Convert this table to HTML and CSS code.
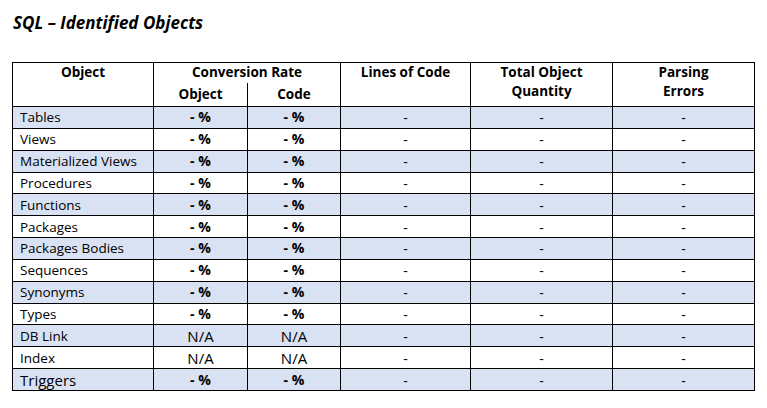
FILE: index.html
```html
<!DOCTYPE html>
<html>
<head>
<meta charset="utf-8">
<link rel="stylesheet" href="styles.css">
</head>
<body>
<h1 class="title">SQL – Identified Objects</h1>
<table class="grid">
  <colgroup>
    <col class="c-obj"><col class="c-rate"><col class="c-rate2"><col class="c-loc"><col class="c-tot"><col class="c-err">
  </colgroup>
  <thead>
    <tr class="h1">
      <th rowspan="2" class="top">Object</th>
      <th colspan="2" class="rate">Conversion Rate</th>
      <th rowspan="2" class="top">Lines of Code</th>
      <th rowspan="2" class="top">Total Object<br>Quantity</th>
      <th rowspan="2" class="top">Parsing<br>Errors</th>
    </tr>
    <tr class="h2">
      <th class="sub">Object</th>
      <th class="sub sub2">Code</th>
    </tr>
  </thead>
  <tbody>
    <tr class="alt"><td class="name">Tables</td><td class="pct">- %</td><td class="pct">- %</td><td class="dash">-</td><td class="dash">-</td><td class="dash">-</td></tr>
    <tr><td class="name">Views</td><td class="pct">- %</td><td class="pct">- %</td><td class="dash">-</td><td class="dash">-</td><td class="dash">-</td></tr>
    <tr class="alt"><td class="name">Materialized Views</td><td class="pct">- %</td><td class="pct">- %</td><td class="dash">-</td><td class="dash">-</td><td class="dash">-</td></tr>
    <tr><td class="name">Procedures</td><td class="pct">- %</td><td class="pct">- %</td><td class="dash">-</td><td class="dash">-</td><td class="dash">-</td></tr>
    <tr class="alt"><td class="name">Functions</td><td class="pct">- %</td><td class="pct">- %</td><td class="dash">-</td><td class="dash">-</td><td class="dash">-</td></tr>
    <tr><td class="name">Packages</td><td class="pct">- %</td><td class="pct">- %</td><td class="dash">-</td><td class="dash">-</td><td class="dash">-</td></tr>
    <tr class="alt"><td class="name">Packages Bodies</td><td class="pct">- %</td><td class="pct">- %</td><td class="dash">-</td><td class="dash">-</td><td class="dash">-</td></tr>
    <tr><td class="name">Sequences</td><td class="pct">- %</td><td class="pct">- %</td><td class="dash">-</td><td class="dash">-</td><td class="dash">-</td></tr>
    <tr class="alt"><td class="name">Synonyms</td><td class="pct">- %</td><td class="pct">- %</td><td class="dash">-</td><td class="dash">-</td><td class="dash">-</td></tr>
    <tr><td class="name">Types</td><td class="pct">- %</td><td class="pct">- %</td><td class="dash">-</td><td class="dash">-</td><td class="dash">-</td></tr>
    <tr class="alt"><td class="name">DB Link</td><td class="na">N/A</td><td class="na">N/A</td><td class="dash">-</td><td class="dash">-</td><td class="dash">-</td></tr>
    <tr><td class="name">Index</td><td class="na">N/A</td><td class="na">N/A</td><td class="dash">-</td><td class="dash">-</td><td class="dash">-</td></tr>
    <tr class="alt"><td class="name big">Triggers</td><td class="pct">- %</td><td class="pct">- %</td><td class="dash">-</td><td class="dash">-</td><td class="dash">-</td></tr>
  </tbody>
</table>
</body>
</html>
```
FILE: styles.css
```css
html, body {
  margin: 0;
  padding: 0;
  background: #ffffff;
}
body {
  font-family: "Open Sans", "Noto Sans", sans-serif;
  color: #000;
  padding: 12px 0 0 12px;
}
.title {
  margin: 0 0 0 1px;
  font-size: 17px;
  font-weight: 700;
  font-style: italic;
  line-height: 22px;
  height: 22px;
}
.grid {
  margin-top: 28px;
  border-collapse: collapse;
  table-layout: fixed;
  width: 742px;
  border: 1px solid #000;
}
.c-obj { width: 141px; }
.c-rate { width: 94px; }
.c-rate2 { width: 93px; }
.c-loc { width: 130px; }
.c-tot { width: 142px; }
.c-err { width: 142px; }
th, td {
  border: 1px solid #000;
  padding: 0;
}
th {
  font-size: 13.5px;
  font-weight: 700;
  line-height: 19px;
  text-align: center;
}
.h1 { height: 20px; }
.h2 { height: 24px; }
th.top {
  vertical-align: top;
  padding-top: 0;
}
th.rate {
  border-bottom: none;
  vertical-align: top;
  padding-top: 0;
}
th.sub {
  border-top: none;
  vertical-align: middle;
  padding-top: 1px;
}
tbody tr { height: 21.85px; }
tbody tr.alt { background: #d9e2f3; }
td {
  font-size: 13.5px;
  line-height: 16px;
  text-align: center;
  vertical-align: middle;
}
td.name {
  text-align: left;
  padding-left: 7px;
  white-space: nowrap;
}
td.name.big { font-size: 15px; }
td.pct { font-weight: 700; font-size: 14px; }
td.na { font-size: 15px; }
td.dash { font-size: 14px; padding-top: 2px; }
```
